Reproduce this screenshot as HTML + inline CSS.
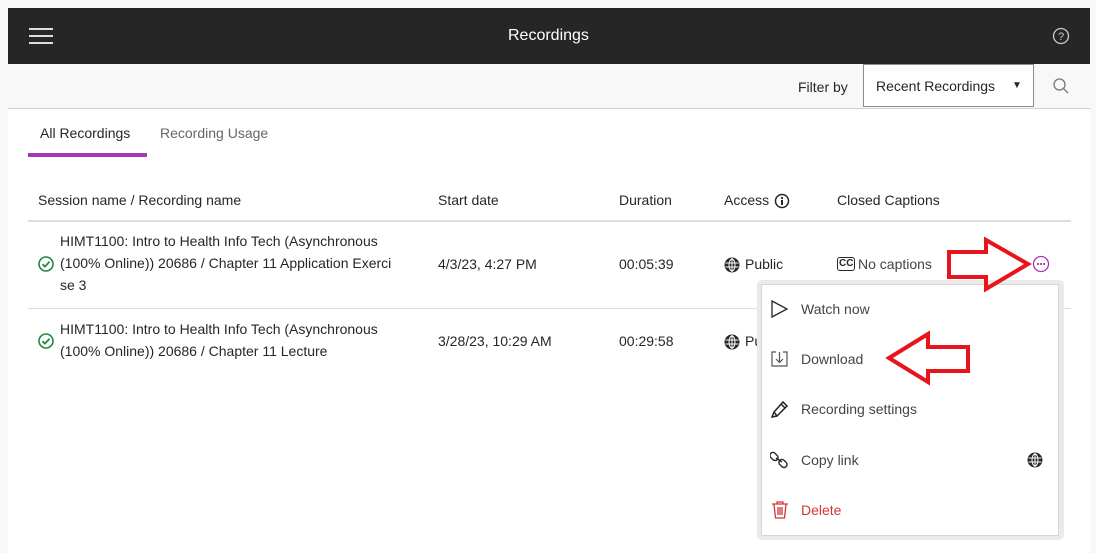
<!DOCTYPE html>
<html><head><style>
body{margin:0;width:1096px;height:553px;background:#f8f8f8;font-family:"Liberation Sans",sans-serif;color:#262626;position:relative;overflow:hidden;font-size:14px}
.a{position:absolute;white-space:nowrap}
</style></head><body>
<div class="a" style="left:8px;top:8px;width:1082px;height:56px;background:#262626"></div>
<div class="a" style="left:29px;top:28px;width:24px;height:2px;background:#ddd;box-shadow:0 7px 0 #ddd,0 14px 0 #ddd"></div>
<div class="a" style="left:508px;top:27px;color:#fff;font-size:16px">Recordings</div>
<svg class="a" style="left:1052px;top:27px" width="18" height="18" viewBox="0 0 18 18"><circle cx="9" cy="9" r="7.5" fill="none" stroke="#ccc" stroke-width="1.3"/><text x="9" y="13" font-size="11" text-anchor="middle" fill="#ccc" font-family="Liberation Sans">?</text></svg>
<div class="a" style="left:8px;top:64px;width:1082px;height:44px;background:#f8f8f8;border-bottom:1px solid #d0d0d0"></div>
<div class="a" style="left:798px;top:79px">Filter by</div>
<div class="a" style="left:863px;top:64px;width:171px;height:43px;border:1px solid #8c8c8c;background:#fff;box-sizing:border-box"></div>
<div class="a" style="left:876px;top:78px">Recent Recordings</div>
<div class="a" style="left:1012px;top:80px;font-size:10px">▼</div>
<svg class="a" style="left:1052px;top:77px" width="18" height="18"><circle cx="7.5" cy="7.5" r="5.5" fill="none" stroke="#777" stroke-width="1.3"/><line x1="11.5" y1="11.5" x2="16" y2="16" stroke="#777" stroke-width="1.3"/></svg>
<div class="a" style="left:8px;top:109px;width:1082px;height:444px;background:#fff"></div>
<div class="a" style="left:40px;top:125px">All Recordings</div>
<div class="a" style="left:160px;top:125px;color:#666">Recording Usage</div>
<div class="a" style="left:28px;top:153px;width:119px;height:4px;background:#a438b7"></div>
<div class="a" style="left:38px;top:192px">Session name / Recording name</div>
<div class="a" style="left:438px;top:192px">Start date</div>
<div class="a" style="left:619px;top:192px">Duration</div>
<div class="a" style="left:724px;top:192px">Access</div>
<svg class="a" style="left:774px;top:193px" width="16" height="16"><circle cx="8" cy="8" r="6.5" fill="none" stroke="#262626" stroke-width="1.5"/><rect x="7" y="7" width="2" height="5" fill="#262626"/><circle cx="8" cy="5" r="1.1" fill="#262626"/></svg>
<div class="a" style="left:837px;top:192px">Closed Captions</div>
<div class="a" style="left:28px;top:220px;width:1043px;height:2px;background:#ddd"></div>
<div class="a" style="left:60px;top:230px;line-height:22px">HIMT1100: Intro to Health Info Tech (Asynchronous<br>(100% Online)) 20686 / Chapter 11 Application Exerci<br>se 3</div>
<svg class="a" style="left:38px;top:256px" width="16" height="16"><circle cx="8" cy="8" r="7" fill="none" stroke="#1e8a3c" stroke-width="1.6"/><path d="M4.5 8.2l2.4 2.4 4.6-4.8" fill="none" stroke="#1e8a3c" stroke-width="1.8"/></svg>
<div class="a" style="left:438px;top:256px">4/3/23, 4:27 PM</div>
<div class="a" style="left:619px;top:256px">00:05:39</div>
<svg class="a" style="left:724px;top:257px" width="16" height="16"><circle cx="8" cy="8" r="7.5" fill="#262626"/><g stroke="#fff" stroke-width="1" fill="none"><ellipse cx="8" cy="8" rx="3" ry="6"/><line x1="1.5" y1="6" x2="14.5" y2="6"/><line x1="1.5" y1="10" x2="14.5" y2="10"/><line x1="8" y1="1" x2="8" y2="15"/></g></svg>
<div class="a" style="left:745px;top:256px">Public</div>
<div class="a" style="left:837px;top:257px;border:1.5px solid #262626;border-radius:3px;font-size:10px;font-weight:bold;line-height:12px;padding:0 1px">CC</div>
<div class="a" style="left:858px;top:256px;color:#444">No captions</div>
<svg class="a" style="left:1032px;top:255px" width="18" height="18"><circle cx="9" cy="9" r="7.5" fill="none" stroke="#a438b7" stroke-width="1.3"/><circle cx="6" cy="9" r="1.1" fill="#a438b7"/><circle cx="9" cy="9" r="1.1" fill="#a438b7"/><circle cx="12" cy="9" r="1.1" fill="#a438b7"/></svg>
<div class="a" style="left:28px;top:308px;width:1043px;height:1px;background:#ddd"></div>
<div class="a" style="left:60px;top:318px;line-height:22px">HIMT1100: Intro to Health Info Tech (Asynchronous<br>(100% Online)) 20686 / Chapter 11 Lecture</div>
<svg class="a" style="left:38px;top:333px" width="16" height="16"><circle cx="8" cy="8" r="7" fill="none" stroke="#1e8a3c" stroke-width="1.6"/><path d="M4.5 8.2l2.4 2.4 4.6-4.8" fill="none" stroke="#1e8a3c" stroke-width="1.8"/></svg>
<div class="a" style="left:438px;top:333px">3/28/23, 10:29 AM</div>
<div class="a" style="left:619px;top:333px">00:29:58</div>
<svg class="a" style="left:724px;top:334px" width="16" height="16"><circle cx="8" cy="8" r="7.5" fill="#262626"/><g stroke="#fff" stroke-width="1" fill="none"><ellipse cx="8" cy="8" rx="3" ry="6"/><line x1="1.5" y1="6" x2="14.5" y2="6"/><line x1="1.5" y1="10" x2="14.5" y2="10"/><line x1="8" y1="1" x2="8" y2="15"/></g></svg>
<div class="a" style="left:745px;top:333px">Public</div>
<div class="a" style="left:757px;top:280px;width:307px;height:260px;background:#eaeaea;border-radius:5px"></div>
<div class="a" style="left:761px;top:284px;width:298px;height:252px;background:#fff;border:1px solid #d6d6d6;box-sizing:border-box"></div>
<svg class="a" style="left:770px;top:299px" width="20" height="20"><path d="M2 2L17 10L2 18Z" fill="none" stroke="#262626" stroke-width="1.3"/></svg>
<div class="a" style="left:801px;top:301px;color:#444">Watch now</div>
<svg class="a" style="left:770px;top:349px" width="20" height="20"><path d="M6 3H2V17H17V3H13M9.5 3V13M6 10l3.5 3.5L13 10" fill="none" stroke="#555" stroke-width="1.2"/></svg>
<div class="a" style="left:801px;top:351px;color:#444">Download</div>
<svg class="a" style="left:770px;top:399px" width="20" height="20"><path d="M4 13L13 3L17 7L7 17L2 18ZM4 13L7 17M11 5L15 9" fill="none" stroke="#262626" stroke-width="1.5"/></svg>
<div class="a" style="left:801px;top:401px;color:#444">Recording settings</div>
<svg class="a" style="left:770px;top:450px" width="20" height="20"><g fill="none" stroke="#262626" stroke-width="1.4"><rect x="1" y="2" width="6" height="9" rx="3" transform="rotate(-45 4 6.5)"/><rect x="10" y="9" width="6" height="9" rx="3" transform="rotate(-45 13 13.5)"/><line x1="6" y1="8" x2="12" y2="12"/></g></svg>
<div class="a" style="left:801px;top:452px;color:#444">Copy link</div>
<svg class="a" style="left:1027px;top:452px" width="16" height="16"><circle cx="8" cy="8" r="7.5" fill="#262626"/><g stroke="#fff" stroke-width="1" fill="none"><ellipse cx="8" cy="8" rx="3" ry="6"/><line x1="1.5" y1="6" x2="14.5" y2="6"/><line x1="1.5" y1="10" x2="14.5" y2="10"/><line x1="8" y1="1" x2="8" y2="15"/></g></svg>
<svg class="a" style="left:770px;top:500px" width="20" height="20"><path d="M2 4H18M7 4V2H13V4M4 4L5.5 18H14.5L16 4M8 7V15M10 7V15M12 7V15" fill="none" stroke="#d0363a" stroke-width="1.3"/></svg>
<div class="a" style="left:801px;top:502px;color:#d0363a">Delete</div>
<svg class="a" style="left:0;top:0" width="1096" height="553"><polygon points="949,252 986,252 986,240 1028,264 986,289 986,277 949,277" fill="none" stroke="#e8141c" stroke-width="4"/><polygon points="968,347 928,347 928,334 889,358 928,382 928,371 968,371" fill="none" stroke="#e8141c" stroke-width="4"/></svg>
</body></html>
